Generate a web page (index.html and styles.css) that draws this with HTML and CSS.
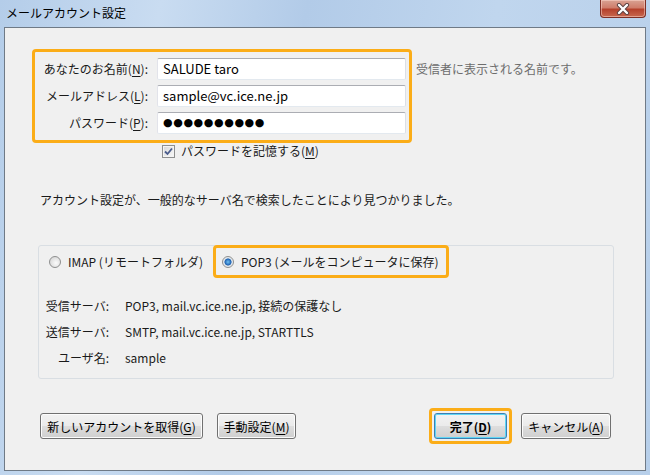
FILE: index.html
```html
<!DOCTYPE html>
<html lang="ja">

<head>
    <meta charset="UTF-8">
    <meta name="viewport" content="width=device-width, initial-scale=1.0">
    <title>メールアカウント設定</title>
    <link rel="stylesheet" href="styles.css">
</head>

<body>
    <div class="window">
        <div class="titlebar">
            <span class="title">メールアカウント設定</span>
            <div class="close">
                <svg width="14" height="12" viewBox="0 0 14 12">
                    <path d="M3 2 L11 10 M11 2 L3 10" stroke="#5a4040" stroke-width="4.2" stroke-linecap="round" />
                    <path d="M3 2 L11 10 M11 2 L3 10" stroke="#ffffff" stroke-width="2.4" stroke-linecap="round" />
                </svg>
            </div>
        </div>

        <div class="client">
            <!-- 名前・アドレス・パスワード -->
            <div class="identity">
                <div class="highlight identity-box">
                    <label class="field-label">あなたのお名前(<u>N</u>):</label>
                    <div class="textbox">SALUDE taro</div>
                    <label class="field-label">メールアドレス(<u>L</u>):</label>
                    <div class="textbox">sample@vc.ice.ne.jp</div>
                    <label class="field-label">パスワード(<u>P</u>):</label>
                    <div class="textbox textbox-password">●●●●●●●●●●</div>
                </div>
                <div class="hint">受信者に表示される名前です。</div>
            </div>

            <div class="remember">
                <span class="checkbox">
                    <svg width="9" height="9" viewBox="0 0 9 9">
                        <path d="M1 4.5 L3.5 7 L8 1.5" fill="none" stroke="#4a5c8c" stroke-width="1.8" />
                    </svg>
                </span>
                <span>パスワードを記憶する(<u>M</u>)</span>
            </div>

            <p class="status">アカウント設定が、一般的なサーバ名で検索したことにより見つかりました。</p>

            <div class="panel">
                <div class="protocols">
                    <div class="option option-imap">
                        <span class="radio"></span>
                        <span>IMAP (リモートフォルダ)</span>
                    </div>
                    <div class="option option-pop highlight">
                        <span class="radio checked"></span>
                        <span>POP3 (メールをコンピュータに保存)</span>
                    </div>
                </div>

                <dl class="servers">
                    <dt>受信サーバ:</dt>
                    <dd>POP3, mail.vc.ice.ne.jp, 接続の保護なし</dd>
                    <dt>送信サーバ:</dt>
                    <dd>SMTP, mail.vc.ice.ne.jp, STARTTLS</dd>
                    <dt>ユーザ名:</dt>
                    <dd>sample</dd>
                </dl>
            </div>

            <div class="actions">
                <div class="actions-left">
                    <button class="btn btn-new">新しいアカウントを取得(<u>G</u>)</button>
                    <button class="btn btn-manual">手動設定(<u>M</u>)</button>
                </div>
                <div class="actions-right">
                    <div class="highlight default-wrap">
                        <button class="btn btn-done">完了(<u>D</u>)</button>
                    </div>
                    <button class="btn btn-cancel">キャンセル(<u>A</u>)</button>
                </div>
            </div>
        </div>
    </div>
</body>

</html>
```

FILE: styles.css
```css
* {
    box-sizing: border-box;
}

html,
body {
    margin: 0;
    padding: 0;
}

body {
    font-family: "Noto Sans CJK JP", "Noto Sans", sans-serif;
    font-size: 12px;
    color: #1a1a1a;
    background-color: #bcd3ec;
}

u {
    text-decoration: underline;
    text-underline-offset: 2px;
}

/* ウィンドウ枠 */
.window {
    width: 650px;
    height: 475px;
    display: flex;
    flex-direction: column;
    background: linear-gradient(100deg, #b4cde9 0%, #c9dcf1 22%, #b2cbe8 42%, #c0d6ee 68%, #b7cfea 100%);
}

.titlebar {
    height: 27px;
    display: flex;
    justify-content: space-between;
    align-items: flex-start;
    padding: 0 4px 0 6px;
}

.title {
    line-height: 26px;
    font-size: 12px;
    color: #000;
}

.close {
    width: 46px;
    height: 18px;
    display: flex;
    align-items: center;
    justify-content: center;
    border: 1px solid #7d2f26;
    border-top: none;
    border-radius: 0 0 4px 4px;
    background: linear-gradient(#d9a293 0%, #cf7d6b 45%, #b5412c 55%, #c8684f 100%);
    box-shadow: inset 0 0 0 1px rgba(255, 220, 210, 0.5);
}

.client {
    flex: 1;
    margin: 0 4px 4px;
    border: 1px solid #6f7a86;
    background-color: #f0f0f0;
    display: flex;
    flex-direction: column;
}

/* オレンジの強調枠 */
.highlight {
    border: 3px solid #fbad18;
    border-radius: 4px;
}

.identity {
    display: flex;
    align-items: flex-start;
    margin-top: 21px;
    padding-left: 27px;
}

.identity-box {
    display: grid;
    grid-template-columns: 113px 249px;
    column-gap: 9px;
    row-gap: 5px;
    padding: 6px 3px 6px 0;
}

.field-label {
    text-align: right;
    line-height: 22px;
    white-space: nowrap;
}

.textbox {
    height: 22px;
    border: 1px solid;
    border-color: #abadb3 #dbdfe6 #e3e9ef #e2e3ea;
    border-radius: 2px;
    background-color: #fff;
    padding-left: 5px;
    line-height: 20px;
    font-size: 13px;
    color: #000;
}

.textbox-password {
    font-family: "DejaVu Sans", sans-serif;
    font-size: 11px;
    letter-spacing: 0.6px;
}

.hint {
    margin: 9px 0 0 4px;
    line-height: 22px;
    color: #6d6d6d;
}

.remember {
    display: flex;
    align-items: center;
    gap: 6px;
    margin: 1px 0 0 157px;
    line-height: 14px;
}

.checkbox {
    width: 13px;
    height: 13px;
    border: 1px solid #8e8f8f;
    background: linear-gradient(135deg, #d6d6d6, #fafafa);
    box-shadow: inset 0 0 0 1px #f4f4f4;
    display: flex;
    align-items: center;
    justify-content: center;
}

.status {
    margin: 33px 0 0 35px;
    line-height: 17px;
}

/* サーバ情報 */
.panel {
    margin: 37px 0 0 33px;
    width: 576px;
    border: 1px solid #d9dee3;
    border-radius: 3px;
    padding-bottom: 7px;
}

.protocols {
    display: flex;
    align-items: center;
    height: 33px;
    margin-top: -1px;
}

.option {
    display: flex;
    align-items: center;
    gap: 7px;
    white-space: nowrap;
}

.option-imap {
    width: 174px;
    padding-left: 10px;
}

.option-pop {
    height: 33px;
    width: 236px;
    padding-left: 6px;
}

.radio {
    width: 12px;
    height: 12px;
    border-radius: 50%;
    border: 1px solid #8e8f8f;
    background: radial-gradient(circle at 60% 60%, #fbfbfb 0%, #dcdcdc 70%);
}

.radio.checked {
    background: radial-gradient(circle, #6fc2f4 0%, #1d5fb0 45%, #dfe6ec 55%, #f6f6f6 100%);
}

.servers {
    display: grid;
    grid-template-columns: 70px auto;
    column-gap: 16px;
    margin: 15px 0 0;
    line-height: 26px;
}

.servers dt {
    text-align: right;
}

.servers dd {
    margin: 0;
}

/* ボタン */
.actions {
    display: flex;
    align-items: center;
    justify-content: space-between;
    margin-top: 29px;
    padding: 0 34px 0 35px;
}

.actions-left,
.actions-right {
    display: flex;
    align-items: center;
}

.actions-left {
    gap: 14px;
}

.actions-right {
    gap: 9px;
}

.btn {
    height: 26px;
    padding: 0;
    border: 1px solid #707070;
    border-radius: 3px;
    background: linear-gradient(#f2f2f2 0%, #ebebeb 48%, #dddddd 52%, #cfcfcf 100%);
    box-shadow: inset 0 0 0 1px #fcfcfc;
    font-family: inherit;
    font-size: 12px;
    color: #000;
    white-space: nowrap;
}

.btn-new {
    width: 163px;
}

.btn-manual {
    width: 79px;
}

.btn-cancel {
    width: 90px;
}

.default-wrap {
    padding: 2px;
}

.btn-done {
    display: block;
    width: 73px;
    border-color: #3c7fb1;
    box-shadow: inset 0 0 0 1px #5fd6f5;
    font-weight: bold;
}
```
